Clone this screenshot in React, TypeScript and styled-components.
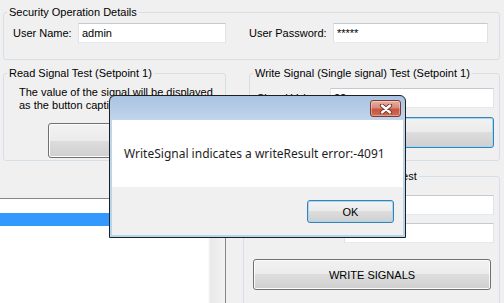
import React from "react";
import styled, { createGlobalStyle } from "styled-components";

const GlobalStyle = createGlobalStyle`
  html, body {
    margin: 0;
    padding: 0;
    background: #f0f0f0;
  }
  #root {
    width: 504px;
    height: 303px;
    overflow: hidden;
  }
`;

const Form = styled.div`
  position: relative;
  width: 504px;
  height: 303px;
  overflow: hidden;
  background: #f0f0f0;
  font-family: "Liberation Sans", Arial, sans-serif;
  font-size: 11px;
  line-height: 13px;
  color: #000;
  display: flex;
  flex-direction: column;
`;

interface GroupProps {
  $left: number;
  $width: number;
  $top: number;
}

const Group = styled.fieldset<GroupProps>`
  box-sizing: border-box;
  flex: none;
  margin: ${({ $top }) => $top}px 0 0 ${({ $left }) => $left}px;
  width: ${({ $width }) => $width}px;
  min-width: 0;
  padding: 0;
  border: 1px solid #d5dfe5;
  border-radius: 3px;
`;

const Legend = styled.legend`
  margin-left: 3px;
  padding: 0 2px;
  font-size: 11px;
  line-height: 13px;
`;

const GroupBody = styled.div<{ $pad: string }>`
  display: flex;
  flex-direction: column;
  align-items: flex-start;
  padding: ${({ $pad }) => $pad};
`;

const FieldRow = styled.div<{ $top?: number }>`
  display: flex;
  align-items: center;
  margin-top: ${({ $top }) => $top ?? 0}px;
`;

const Label = styled.span<{ $width: number; $indent?: number }>`
  flex: none;
  width: ${({ $width }) => $width}px;
  margin-left: ${({ $indent }) => $indent ?? 0}px;
  white-space: nowrap;
`;

const TextBox = styled.div<{ $width: number }>`
  box-sizing: border-box;
  flex: none;
  width: ${({ $width }) => $width}px;
  height: 20px;
  padding: 0 3px;
  display: flex;
  align-items: center;
  background: #ffffff;
  border: 1px solid;
  border-color: #c5cad2 #dfe3e9 #e3e9ef #dfe3e9;
  white-space: nowrap;
`;

const Caption = styled.div`
  margin-left: 15px;
  white-space: nowrap;
`;

interface ButtonProps {
  $width: number;
  $height: number;
  $indent?: number;
  $top?: number;
  $focused?: boolean;
}

const Button = styled.button<ButtonProps>`
  box-sizing: border-box;
  flex: none;
  width: ${({ $width }) => $width}px;
  height: ${({ $height }) => $height}px;
  margin: ${({ $top }) => $top ?? 0}px 0 0 ${({ $indent }) => $indent ?? 0}px;
  padding: 0;
  border: 1px solid ${({ $focused }) => ($focused ? "#3c7fb1" : "#707070")};
  border-radius: 3px;
  background: linear-gradient(#f2f2f2 0%, #ebebeb 50%, #dddddd 50%, #cfcfcf 100%);
  box-shadow: inset 0 0 0 1px
    ${({ $focused }) => ($focused ? "#9fdbf6" : "#fcfcfc")};
  font-family: "Liberation Sans", Arial, sans-serif;
  font-size: 11px;
  color: #000;
`;

const Columns = styled.div`
  display: flex;
  align-items: flex-start;
`;

const LeftColumn = styled.div`
  width: 226px;
  flex: none;
  display: flex;
  flex-direction: column;
`;

const RightColumn = styled.div`
  width: 257px;
  flex: none;
  margin-left: 17px;
  display: flex;
  flex-direction: column;
`;

const ListBox = styled.div`
  box-sizing: border-box;
  width: 227px;
  height: 120px;
  margin: 37px 0 0 -1px;
  border: 1px solid #828790;
  background: #ffffff;
  display: flex;
`;

const ListItems = styled.div`
  flex: 1;
  padding-top: 1px;
`;

const ListItem = styled.div<{ $selected?: boolean }>`
  height: 13px;
  background: ${({ $selected }) => ($selected ? "#3399ff" : "transparent")};
  color: ${({ $selected }) => ($selected ? "#fff" : "#000")};
`;

const ScrollTrack = styled.div`
  width: 17px;
  flex: none;
  background: linear-gradient(90deg, #fafafa 0, #fafafa 1px, #e9e9e9 2px, #f2f2f2 100%);
`;

/* message box lying over the form */

const Dialog = styled.div`
  position: absolute;
  left: 109px;
  top: 95px;
  width: 297px;
  height: 143px;
  box-sizing: border-box;
  border: 1px solid #1f1f1f;
  border-radius: 6px 6px 0 0;
  padding: 0 2px 2px;
  background: linear-gradient(#a9c3e2 0, #c1d5ec 24px, #b2d6ee 100%);
  display: flex;
  flex-direction: column;
`;

const TitleBar = styled.div`
  height: 24px;
  flex: none;
  display: flex;
  justify-content: flex-end;
  align-items: flex-start;
  padding: 4px 2px 0 0;
  box-sizing: border-box;
`;

const CloseButton = styled.div`
  box-sizing: border-box;
  width: 31px;
  height: 17px;
  border: 1px solid #7f3a2e;
  border-radius: 3px;
  background: linear-gradient(#e7b1a5 0%, #d98a79 45%, #c75641 55%, #cf6c57 100%);
  box-shadow: inset 0 0 0 1px rgba(255, 255, 255, 0.35);
  display: flex;
  align-items: center;
  justify-content: center;
`;

const Message = styled.div`
  height: 67px;
  flex: none;
  background: #ffffff;
  display: flex;
  align-items: center;
  padding-left: 12px;
  font-family: "Noto Sans", "Open Sans", sans-serif;
  font-size: 12px;
  color: #1e1e1e;
`;

const Footer = styled.div`
  flex: 1;
  background: #f0f0f0;
  display: flex;
  justify-content: flex-end;
  align-items: flex-start;
  padding: 13px 9px 0 0;
`;

function CloseGlyph() {
  return (
    <svg width="14" height="10" viewBox="0 0 14 10">
      <path d="M3 1.5 L11 8.5 M11 1.5 L3 8.5" stroke="#6b2a20" strokeWidth="4.2" strokeLinecap="round" />
      <path d="M3 1.5 L11 8.5 M11 1.5 L3 8.5" stroke="#ffffff" strokeWidth="2.4" strokeLinecap="round" />
    </svg>
  );
}

export default function App() {
  return (
    <Form>
      <GlobalStyle />
      <Group $left={3} $width={497} $top={6}>
        <Legend>Security Operation Details</Legend>
        <GroupBody $pad="4px 0 16px 9px">
          <FieldRow>
            <Label $width={65}>User Name:</Label>
            <TextBox $width={148}>admin</TextBox>
            <Label $width={84} $indent={23}>User Password:</Label>
            <TextBox $width={155}>*****</TextBox>
          </FieldRow>
        </GroupBody>
      </Group>

      <Columns>
        <LeftColumn>
          <Group $left={3} $width={223} $top={7}>
            <Legend>Read Signal Test (Setpoint 1)</Legend>
            <GroupBody $pad="6px 0 2px 0">
              <Caption>
                The value of the signal will be displayed
                <br />
                as the button caption
              </Caption>
              <Button $width={132} $height={35} $indent={44} $top={11} />
            </GroupBody>
          </Group>
          <ListBox>
            <ListItems>
              <ListItem />
              <ListItem $selected />
            </ListItems>
            <ScrollTrack />
          </ListBox>
        </LeftColumn>

        <RightColumn>
          <Group $left={6} $width={251} $top={7}>
            <Legend>Write Signal (Single signal) Test (Setpoint 1)</Legend>
            <GroupBody $pad="8px 0 12px 0">
              <FieldRow>
                <Label $width={73} $indent={7}>Signal Value:</Label>
                <TextBox $width={164}>22</TextBox>
              </FieldRow>
              <Button $width={239} $height={31} $indent={5} $top={9} $focused>
                WRITE
              </Button>
            </GroupBody>
          </Group>

          <Group $left={0} $width={257} $top={9}>
            <Legend>Write Signal (Multiple signals) Test</Legend>
            <GroupBody $pad="12px 0 20px 0">
              <FieldRow>
                <Label $width={93} $indent={7}>Name:</Label>
                <TextBox $width={150} />
              </FieldRow>
              <FieldRow $top={8}>
                <Label $width={93} $indent={7}>Value:</Label>
                <TextBox $width={150} />
              </FieldRow>
              <Button $width={238} $height={31} $indent={9} $top={16}>
                WRITE SIGNALS
              </Button>
            </GroupBody>
          </Group>
        </RightColumn>
      </Columns>

      <Dialog>
        <TitleBar>
          <CloseButton>
            <CloseGlyph />
          </CloseButton>
        </TitleBar>
        <Message>WriteSignal indicates a writeResult error:-4091</Message>
        <Footer>
          <Button $width={87} $height={23} $focused>
            OK
          </Button>
        </Footer>
      </Dialog>
    </Form>
  );
}
